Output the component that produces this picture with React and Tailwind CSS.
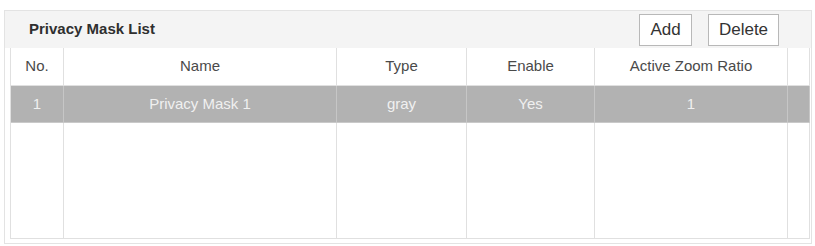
import React from "react";

const cols = "grid grid-cols-[53px_273px_130px_128px_193px_22px]";

export default function App() {
  const headers = ["No.", "Name", "Type", "Enable", "Active Zoom Ratio", ""];
  const row = ["1", "Privacy Mask 1", "gray", "Yes", "1", ""];
  return (
    <div
      className="w-[815px] h-[246px] bg-white pt-[10px] pl-[4px]"
      style={{ fontFamily: '"Liberation Sans", Arial, sans-serif' }}
    >
      <div className="w-[808px] h-[234px] border border-[#e3e3e3] flex flex-col">
        <div className="h-[37px] bg-[#f4f4f4] flex items-center justify-between pl-[24px] pr-[32px]">
          <span className="text-[15px] font-bold text-[#2f2f2f]">Privacy Mask List</span>
          <div className="flex gap-[16px] items-center">
            <button className="h-[32px] w-[53px] border border-[#b8b8b8] bg-white text-[17px] text-[#333] leading-none">
              Add
            </button>
            <button className="h-[32px] w-[71px] border border-[#b8b8b8] bg-white text-[17px] text-[#333] leading-none">
              Delete
            </button>
          </div>
        </div>
        <div className="ml-[5px] w-[800px] border-l border-b border-[#e0e0e0] flex flex-col">
          <div className={`${cols} h-[38px] border-b border-[#e0e0e0] bg-white`}>
            {headers.map((h, i) => (
              <div
                key={i}
                className="border-r border-[#e0e0e0] flex items-center justify-center text-[15px] text-[#4a4a4a]"
              >
                {h}
              </div>
            ))}
          </div>
          <div className={`${cols} h-[37px] bg-[#b2b2b2] border-b border-[#c9c9c9]`}>
            {row.map((h, i) => (
              <div
                key={i}
                className="border-r border-[#c6c6c6] flex items-center justify-center text-[15px] text-[#f0f0f0]"
              >
                {h}
              </div>
            ))}
          </div>
          <div className={`${cols} h-[115px]`}>
            {row.map((_, i) => (
              <div key={i} className="border-r border-[#e0e0e0]" />
            ))}
          </div>
        </div>
      </div>
    </div>
  );
}
